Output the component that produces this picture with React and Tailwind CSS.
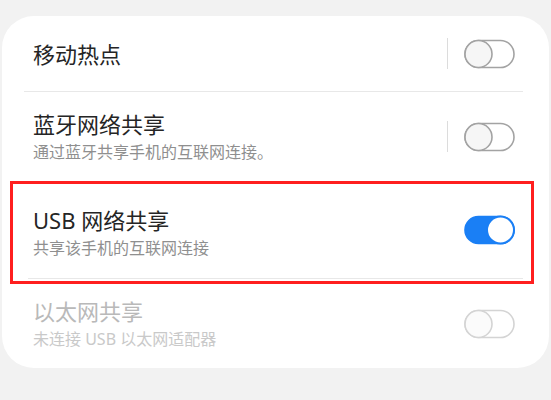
function Switch({ on = false, disabled = false }) {
  const stroke = on ? '#1a7ff5' : disabled ? '#d4d4d4' : '#a3a3a3';
  return (
    <svg width="52" height="30" viewBox="0 0 52 30" className="shrink-0">
      <rect
        x="1"
        y="1.5"
        width="49"
        height="27"
        rx="13.5"
        fill={on ? '#1a7ff5' : 'none'}
        stroke={stroke}
        strokeWidth="1.6"
      />
      <circle
        cx={on ? 36.5 : 14.5}
        cy="15"
        r="13.5"
        fill={on ? '#ffffff' : disabled ? '#fbfbfb' : '#f6f6f6'}
        stroke={stroke}
        strokeWidth={on ? 2 : 1.6}
      />
    </svg>
  );
}

function Row({ title, subtitle, on, disabled, bar, height, textOffset = '' }) {
  return (
    <div className={`flex items-center pl-[31px] pr-[33px] ${height}`}>
      <div className={`flex-1 flex flex-col ${textOffset}`}>
        <span
          className={`text-[22px] leading-[28px] ${
            disabled ? 'text-[#b9b9b9]' : 'text-[#252525]'
          }`}
        >
          {title}
        </span>
        {subtitle && (
          <span
            className={`mt-[3px] text-[16px] leading-[22px] ${
              disabled ? 'text-[#c9c9c9]' : 'text-[#8f8f8f]'
            }`}
          >
            {subtitle}
          </span>
        )}
      </div>
      {bar && <div className="w-px h-[31px] bg-[#dcdcdc] mr-4" />}
      <Switch on={on} disabled={disabled} />
    </div>
  );
}

export default function App() {
  return (
    <div className="w-[551px] h-[400px] bg-[#f2f2f2] pt-4 overflow-hidden font-['Noto_Sans','Noto_Sans_CJK_SC',sans-serif]">
      <div className="relative ml-[2px] mr-[2px] bg-white rounded-[32px]">
        <Row title="移动热点" bar height="h-[75px]" />
        <div className="ml-[22px] mr-[26px] h-px bg-[#e8e8e8]" />
        <Row
          title="蓝牙网络共享"
          subtitle="通过蓝牙共享手机的互联网连接。"
          bar
          height="h-[89px]"
        />
        <div className="ml-[22px] mr-[26px] h-px bg-[#e8e8e8]" />
        <Row
          title="USB 网络共享"
          subtitle="共享该手机的互联网连接"
          on
          height="h-[96px]"
          textOffset="mt-[4px]"
        />
        <div className="ml-[26px] mr-[26px] h-px bg-[#e8e8e8]" />
        <Row
          title="以太网共享"
          subtitle="未连接 USB 以太网适配器"
          disabled
          height="h-[89px]"
        />

        {/* red highlight frame */}
        <div className="absolute left-[8px] top-[165px] w-[524px] h-[103px] border-[3px] border-[#ff1f1f] pointer-events-none" />
      </div>
    </div>
  );
}
